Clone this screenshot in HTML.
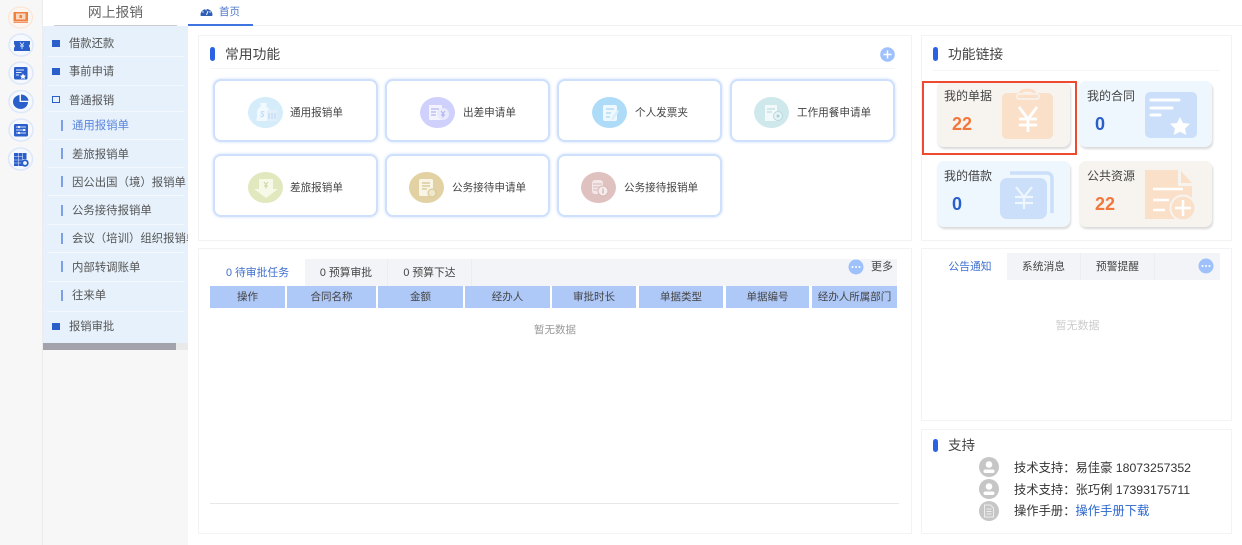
<!DOCTYPE html>
<html lang="zh"><head><meta charset="utf-8"><title>网上报销</title>
<style>
*{box-sizing:border-box}
html,body{margin:0;padding:0;width:1242px;height:545px;overflow:hidden;background:#fff;font-family:"Liberation Sans","Noto Sans CJK SC",sans-serif;color:#444}
#r{position:relative;width:1242px;height:545px;overflow:hidden;filter:blur(.35px)}
.a{position:absolute}
.t{position:absolute;white-space:nowrap;line-height:16px}
.panel{position:absolute;background:#fff;border:1px solid #f3f3f5}
.card{position:absolute;width:165px;height:63px;background:#fff;border:2px solid #cfe0fc;border-radius:8px;box-shadow:0 0 3px #cfe0fc}
.card i{position:absolute;width:35px;height:31px;border-radius:50%;top:15.5px}
.card svg{position:absolute;left:0;top:0;width:35px;height:31px}
.card span{position:absolute;top:23.5px;font-size:10.6px;line-height:16px;white-space:nowrap;color:#444}
.bar{position:absolute;width:5px;height:14px;background:#2b62e3;border-radius:3px}
.fc{position:absolute;width:133px;height:66px;border-radius:7px;box-shadow:1px 2px 2px #d9d9d9}
.fc b{position:absolute;left:7px;top:7px;font-weight:400;font-size:12px;line-height:16px;color:#444}
.fc em{position:absolute;top:33px;font:bold 18px/20px "Liberation Sans",sans-serif}
.fc svg{position:absolute;left:0;top:0}
.b{position:absolute;left:52px;width:8px;height:6.5px;background:#2a5ecb}
.s{position:absolute;left:61px;width:2px;height:11px;background:#7d9fe6}
.m{position:absolute;left:69px;font-size:11.3px;line-height:16px;white-space:nowrap;color:#555}
.n{position:absolute;left:72px;font-size:11.4px;line-height:16px;white-space:nowrap;color:#555}
.d{position:absolute;left:47px;width:138px;height:1px;background:#f2f8fe}
.th{position:absolute;top:286px;height:22px;background:#aec8f7;font-size:10.5px;line-height:22px;text-align:center;color:#444;white-space:nowrap}
.tab{position:absolute;font-size:10.8px;text-align:center;color:#444;white-space:nowrap;border-right:1px solid #ebedf1}
</style></head><body><div id="r">

<!-- left rail -->
<div class="a" style="left:0;top:0;width:43px;height:545px;background:#f7f7f7;border-right:1px solid #ececec"></div>
<svg class="a" style="left:0;top:0" width="43" height="175" viewBox="0 0 43 175">
<ellipse cx="20.500" cy="17.500" rx="12" ry="10.500" fill="#fdf6f0" stroke="#fbe6d6" stroke-width="1.200"/>
<path d="M13.500 12h14.500v9h-14.500z" fill="#ee8140"/><path d="M16 13.500h9.500v6h-9.500z" fill="#fbd9c0"/><path d="M19.500 15h2.500v3h-2.500z" fill="#ee8140"/><path d="M13.500 21.500h14.500v1.300h-14.500z" fill="#ee8140"/>
<ellipse cx="21" cy="45" rx="12" ry="11" fill="#f5f8fe" stroke="#dde7fa" stroke-width="1.500"/>
<path d="M14 41h16v3.200a2.200 2.200 0 0 0 0 3.600v3.200h-16v-3.200a2.200 2.200 0 0 0 0-3.600z" fill="#2a5ecb"/><path d="M20 42.500l2 2.500 2-2.500M22 45v4M20 46h4" stroke="#dfe8fa" fill="none" stroke-width=".9"/>
<ellipse cx="21" cy="73" rx="12" ry="11" fill="#f5f8fe" stroke="#dde7fa" stroke-width="1.500"/>
<rect x="14" y="67" width="13.500" height="12.500" rx="1.500" fill="#2a5ecb"/><path d="M16 70h8M16 72.500h5.500M16 75h3" stroke="#dfe8fa" stroke-width="1"/><path d="M23 73.500l1 1.900 2 .3-1.500 1.400.4 2-1.900-1-1.900 1 .4-2-1.500-1.400 2-.3z" fill="#fff"/>
<ellipse cx="21" cy="101.500" rx="12" ry="11" fill="#f5f8fe" stroke="#dde7fa" stroke-width="1.500"/>
<path d="M19.500 95a7.500 7 0 1 0 8.500 7h-8.500z" fill="#2a5ecb"/><path d="M21 94.500a7.500 7 0 0 1 7.500 6.200h-7.500z" fill="#2a5ecb"/>
<ellipse cx="21" cy="130" rx="12" ry="11" fill="#f5f8fe" stroke="#dde7fa" stroke-width="1.500"/>
<rect x="14" y="124" width="14" height="12.500" rx="1.500" fill="#2a5ecb"/><path d="M16 127h10M16 130h10M16 133h10" stroke="#cfdcf7" stroke-width="1"/><circle cx="19" cy="127" r="1.100" fill="#fff"/><circle cx="24" cy="130" r="1.100" fill="#fff"/><circle cx="19" cy="133" r="1.100" fill="#fff"/>
<ellipse cx="20.500" cy="159" rx="12" ry="11" fill="#f5f8fe" stroke="#dde7fa" stroke-width="1.500"/>
<path d="M14 153h4v13h-4zM18.500 153h4v13h-4zM23 153h3.500v6h-3.500z" fill="#2a5ecb"/><path d="M14 156.500h8.500M14 160h8.500M14 163h8.500" stroke="#dfe8fa" stroke-width=".6"/><circle cx="25" cy="163" r="2.800" fill="#f5f8fe" stroke="#2a5ecb" stroke-width="1.800"/>
</svg>

<!-- sidebar -->
<div class="a" style="left:43px;top:0;width:145px;height:26px;background:#fff"></div>
<div class="t" style="left:43px;width:145px;top:5px;text-align:center;font-size:13.8px;color:#666">网上报销</div>
<div class="a" style="left:54px;top:25px;width:123px;height:1px;background:#c9cdd3"></div>
<div class="a" style="left:43px;top:26px;width:145px;height:317px;background:#e6f1fb"></div>
<div class="d" style="top:56px"></div><div class="d" style="top:85px"></div><div class="d" style="top:111px"></div><div class="d" style="top:139px"></div><div class="d" style="top:167px"></div><div class="d" style="top:195px"></div><div class="d" style="top:224px"></div><div class="d" style="top:252px"></div><div class="d" style="top:281px"></div><div class="d" style="top:311px"></div>
<div class="b" style="top:40px"></div><div class="m" style="top:36px">借款还款</div>
<div class="b" style="top:68px"></div><div class="m" style="top:64px">事前申请</div>
<div class="a" style="left:52px;top:96px;width:8px;height:7px;border:1.5px solid #2a5ecb"></div><div class="m" style="top:93px">普通报销</div>
<div class="s" style="top:120px"></div><div class="n" style="top:118px;color:#5a85dd">通用报销单</div>
<div class="s" style="top:148px"></div><div class="n" style="top:147px">差旅报销单</div>
<div class="s" style="top:176px"></div>
<div class="a" style="left:72px;top:175px;width:116px;height:16px;overflow:hidden"><div class="n" style="left:0;top:0">因公出国（境）报销单</div></div>
<div class="s" style="top:205px"></div><div class="n" style="top:203px">公务接待报销单</div>
<div class="s" style="top:233px"></div>
<div class="a" style="left:72px;top:231px;width:116px;height:16px;overflow:hidden"><div class="n" style="left:0;top:0">会议（培训）组织报销单</div></div>
<div class="s" style="top:261px"></div><div class="n" style="top:260px">内部转调账单</div>
<div class="s" style="top:290px"></div><div class="n" style="top:288px">往来单</div>
<div class="b" style="top:323px"></div><div class="m" style="top:319px">报销审批</div>
<div class="a" style="left:43px;top:343px;width:145px;height:7px;background:#e9e9e9"></div>
<div class="a" style="left:43px;top:343px;width:133px;height:7px;background:#a3a3ab"></div>
<div class="a" style="left:43px;top:350px;width:145px;height:195px;background:#f7f7f7"></div>

<!-- top tab -->
<div class="a" style="left:188px;top:25px;width:1054px;height:1px;background:#f1f1f3"></div>
<div class="a" style="left:188px;top:24px;width:65px;height:2px;background:#3f73e0"></div>
<svg class="a" style="left:200px;top:7px" width="13" height="9" viewBox="0 0 13 9"><path d="M.5 8a6 6 0 0 1 12 0c0 .5-.3 1-1 1h-10c-.7 0-1-.5-1-1z" fill="#2f5fb5"/><path d="M6.500 8l1.500-4" stroke="#fff" stroke-width="1"/><circle cx="3" cy="5" r=".7" fill="#fff"/><circle cx="6" cy="2.700" r=".7" fill="#fff"/><circle cx="10" cy="5" r=".7" fill="#fff"/></svg>
<div class="t" style="left:219px;top:4px;font-size:10.5px;color:#4f78c8">首页</div>

<!-- panel: 常用功能 -->
<div class="panel" style="left:198px;top:35px;width:714px;height:206px"></div>
<div class="bar" style="left:210px;top:47px"></div>
<div class="t" style="left:225px;top:47px;font-size:13.8px;color:#444">常用功能</div>
<div class="a" style="left:210px;top:68px;width:685px;height:1px;background:#f5f5f6"></div>
<svg class="a" style="left:880px;top:47px" width="15" height="15" viewBox="0 0 15 15"><circle cx="7.500" cy="7.500" r="7.300" fill="#9fc1fb"/><path d="M3.500 7.500h8M7.500 3.500v8" stroke="#fff" stroke-width="1.500"/></svg>

<div class="card" style="left:213px;top:79px"><i style="left:33px;background:#d5ecfa"><svg viewBox="0 0 35 31"><path d="M9 14c1-3 3-4 4-5l-1-3h7l-1 3c1 1 4 3 4 6v7c0 1-1 2-2 2h-10c-2 0-2-2-1-4z" fill="#f1f8fe"/><text x="12" y="20" font-size="8" fill="#b9d6f3" font-family="Liberation Sans">$</text><rect x="19" y="13" width="10" height="11" fill="#e1effb"/><path d="M21 16v6M24 16v6M27 16v6" stroke="#b9d6f3"/></svg></i><span style="left:75px">通用报销单</span></div>
<div class="card" style="left:385px;top:79px"><i style="left:33px;background:#cfd0fb"><svg viewBox="0 0 35 31"><rect x="9" y="8" width="13" height="15" rx="1" fill="#f3f3fe"/><path d="M11 12h8M11 15h5M11 18h5" stroke="#b5b6f3" stroke-width="1.200"/><circle cx="23" cy="17" r="6" fill="#e9e9fd"/><path d="M21 14l2 2.500 2-2.500M23 16.500v4M21 18h4" stroke="#a8a9ef" fill="none"/></svg></i><span style="left:76px">出差申请单</span></div>
<div class="card" style="left:557px;top:79px"><i style="left:33px;background:#aedcf8"><svg viewBox="0 0 35 31"><rect x="11" y="8" width="14" height="16" rx="2" fill="#eef8fe"/><path d="M14 12h8M14 16h5M14 20h4" stroke="#a9d6f2" stroke-width="1.300"/><path d="M19 22l6-9 2 1.300-6 9z" fill="#d8effc"/></svg></i><span style="left:76px">个人发票夹</span></div>
<div class="card" style="left:730px;top:79px"><i style="left:22px;background:#cfe8ec"><svg viewBox="0 0 35 31"><rect x="11" y="8" width="12" height="16" fill="#f1f9fa"/><path d="M13 12h8M13 15h5" stroke="#bedde2" stroke-width="1.200"/><circle cx="24" cy="19" r="4.500" fill="#e6f3f5" stroke="#b7d9de"/><circle cx="24" cy="19" r="1.500" fill="#a9d0d6"/></svg></i><span style="left:65px">工作用餐申请单</span></div>

<div class="card" style="left:213px;top:154px"><i style="left:33px;background:#e2e8bd"><svg viewBox="0 0 35 31"><path d="M11 7h14v10h5l-12 9-12-9h5z" fill="#f6f8e8"/><path d="M16 10l2 2.500 2-2.500M18 12.500v4M16 14h4" stroke="#c9d29c" fill="none"/></svg></i><span style="left:75px">差旅报销单</span></div>
<div class="card" style="left:385px;top:154px"><i style="left:22px;background:#e2d2a3"><svg viewBox="0 0 35 31"><rect x="10" y="7" width="14" height="17" rx="1.500" fill="#f8f4e6"/><path d="M13 11h8M13 14h8M13 17h5" stroke="#d5c491" stroke-width="1.200"/><circle cx="23" cy="21" r="4" fill="#efe7cc" stroke="#d5c491"/></svg></i><span style="left:65px">公务接待申请单</span></div>
<div class="card" style="left:557px;top:154px"><i style="left:22px;background:#dfc2c0"><svg viewBox="0 0 35 31"><rect x="11" y="8" width="11" height="14" rx="3" fill="#f3e8e7"/><path d="M12 12h9M12 15h9M12 18h9" stroke="#d6b9b7"/><circle cx="22" cy="19" r="5" fill="#f5ecec" stroke="#d6b9b7"/><path d="M22 16.500v5" stroke="#c79f9d"/></svg></i><span style="left:65px">公务接待报销单</span></div>

<!-- panel: tasks -->
<div class="panel" style="left:198px;top:248px;width:714px;height:286px"></div>
<div class="a" style="left:210px;top:259px;width:687px;height:27px;background:#f3f4f8"></div>
<div class="tab" style="left:210px;top:259px;width:95px;height:27px;background:#fff;line-height:28px;color:#3f6fd0;border:0">0 待审批任务</div>
<div class="tab" style="left:305px;top:259px;width:83px;height:27px;line-height:28px">0 预算审批</div>
<div class="tab" style="left:388px;top:259px;width:84px;height:27px;line-height:28px">0 预算下达</div>
<svg class="a" style="left:848px;top:259px" width="16" height="16" viewBox="0 0 16 16"><circle cx="8" cy="8" r="7.500" fill="#9fc1fb"/><circle cx="4.500" cy="8" r="1" fill="#fff"/><circle cx="8" cy="8" r="1" fill="#fff"/><circle cx="11.500" cy="8" r="1" fill="#fff"/></svg>
<div class="t" style="left:871px;top:259px;font-size:11px;color:#444">更多</div>
<div class="th" style="left:210px;width:75px">操作</div>
<div class="th" style="left:287px;width:89px">合同名称</div>
<div class="th" style="left:378px;width:85px">金额</div>
<div class="th" style="left:465px;width:85px">经办人</div>
<div class="th" style="left:552px;width:84px">审批时长</div>
<div class="th" style="left:639px;width:84px">单据类型</div>
<div class="th" style="left:726px;width:83px">单据编号</div>
<div class="th" style="left:812px;width:85px">经办人所属部门</div>
<div class="t" style="left:210px;width:690px;top:322px;text-align:center;font-size:10.5px;color:#999">暂无数据</div>
<div class="a" style="left:210px;top:503px;width:689px;height:1px;background:#e8e8e8"></div>

<!-- panel: links -->
<div class="panel" style="left:921px;top:35px;width:311px;height:206px"></div>
<div class="bar" style="left:933px;top:47px"></div>
<div class="t" style="left:948px;top:47px;font-size:13.8px;color:#444">功能链接</div>
<div class="a" style="left:933px;top:70px;width:287px;height:1px;background:#f5f5f6"></div>

<div class="fc" style="left:937px;top:81px;background:#f7f4f0"><b>我的单据</b><em style="left:15px;color:#f0783c">22</em>
<svg width="133" height="66" viewBox="0 0 133 66"><rect x="65" y="12" width="51" height="46" rx="5" fill="#fae0c9"/><path d="M83 12a8 4.500 0 0 1 15 0" fill="none" stroke="#fae0c9" stroke-width="3"/><rect x="80" y="13" width="22" height="5" rx="2" fill="#fae0c9" stroke="#f7f4f0" stroke-width="1.500"/><path d="M82 26l9 12 9-12M91 38v13M82 38h18M82 44h18" fill="none" stroke="#fff" stroke-width="2.800"/></svg></div>
<div class="a" style="left:922px;top:81px;width:155px;height:74px;border:2px solid #ee4a30"></div>

<div class="fc" style="left:1079px;top:81px;background:#eef7fd"><b style="left:8px">我的合同</b><em style="left:16px;color:#2a5ecb">0</em>
<svg width="134" height="66" viewBox="0 0 134 66"><rect x="66" y="11" width="52" height="46" rx="5" fill="#cbdffa"/><path d="M72 19h28M72 27h21M72 34h9" stroke="#fff" stroke-width="3" stroke-linecap="round" fill="none"/><path d="M101 36l3 6 7 .8-5 4.700 1.400 6.500-6.400-3.300-6.400 3.300 1.400-6.500-5-4.700 7-.8z" fill="#fff"/></svg></div>

<div class="fc" style="left:937px;top:161px;background:#eef7fd"><b>我的借款</b><em style="left:15px;color:#2a5ecb">0</em>
<svg width="133" height="67" viewBox="0 0 133 67"><path d="M73 12h37a5 5 0 0 1 5 5v35" fill="none" stroke="#cbdffa" stroke-width="3.500"/><rect x="63" y="17" width="47" height="41" rx="7" fill="#cbdffa"/><path d="M79 26l8 10 8-10M87 36v12M78 36h18M78 42h18" fill="none" stroke="#eef7fd" stroke-width="2.200"/></svg></div>

<div class="fc" style="left:1079px;top:161px;background:#f7f4f0"><b style="left:8px">公共资源</b><em style="left:16px;color:#f0783c">22</em>
<svg width="134" height="67" viewBox="0 0 134 67"><path d="M66 9h33v16h14v33h-47z" fill="#fae0c9"/><path d="M102 10l11 12h-11z" fill="#fae0c9"/><path d="M74 28h30M74 39h16M74 49h12" stroke="#fff" stroke-width="2.500"/><circle cx="104" cy="47" r="12.500" fill="#fae0c9" stroke="#f7f4f0" stroke-width="2"/><path d="M96 47h16M104 39v16" stroke="#fff" stroke-width="2.500"/></svg></div>

<!-- panel: notices -->
<div class="panel" style="left:921px;top:248px;width:311px;height:173px"></div>
<div class="a" style="left:933px;top:253px;width:287px;height:27px;background:#f3f4f8"></div>
<div class="tab" style="left:933px;top:253px;width:74px;height:27px;background:#fff;line-height:28px;color:#3f6fd0;border:0">公告通知</div>
<div class="tab" style="left:1007px;top:253px;width:74px;height:27px;line-height:28px">系统消息</div>
<div class="tab" style="left:1081px;top:253px;width:74px;height:27px;line-height:28px">预警提醒</div>
<svg class="a" style="left:1198px;top:258px" width="16" height="16" viewBox="0 0 16 16"><circle cx="8" cy="8" r="7.500" fill="#9fc1fb"/><circle cx="4.500" cy="8" r="1" fill="#fff"/><circle cx="8" cy="8" r="1" fill="#fff"/><circle cx="11.500" cy="8" r="1" fill="#fff"/></svg>
<div class="t" style="left:921px;width:313px;top:318px;text-align:center;font-size:11px;color:#ccc">暂无数据</div>

<!-- panel: support -->
<div class="panel" style="left:921px;top:429px;width:311px;height:105px"></div>
<div class="bar" style="left:933px;top:439px;height:13px"></div>
<div class="t" style="left:948px;top:438px;font-size:13.5px;color:#444">支持</div>
<svg class="a" style="left:979px;top:457px" width="20" height="66" viewBox="0 0 20 66">
<circle cx="10" cy="10" r="10" fill="#c6c6c6"/><circle cx="10" cy="7.500" r="3.300" fill="#fff"/><rect x="4.500" y="12.500" width="11" height="3.500" rx="1.700" fill="#fff"/>
<circle cx="10" cy="32" r="10" fill="#c6c6c6"/><circle cx="10" cy="29.500" r="3.300" fill="#fff"/><rect x="4.500" y="34.500" width="11" height="3.500" rx="1.700" fill="#fff"/>
<circle cx="10" cy="54" r="10" fill="#c6c6c6"/><path d="M5.500 48h6l3 3v9h-9z" fill="none" stroke="#eee" stroke-width="1"/><path d="M7.500 52h5M7.500 54.500h5M7.500 57h5" stroke="#eee" stroke-width=".9"/>
</svg>
<div class="t" style="left:1014px;top:460px;font-size:12.3px;color:#333">技术支持：易佳豪 18073257352</div>
<div class="t" style="left:1014px;top:482px;font-size:12.3px;color:#333">技术支持：张巧俐 17393175711</div>
<div class="t" style="left:1014px;top:503px;font-size:12.3px;color:#333">操作手册：<span style="color:#2a66cf">操作手册下载</span></div>

</div></body></html>
